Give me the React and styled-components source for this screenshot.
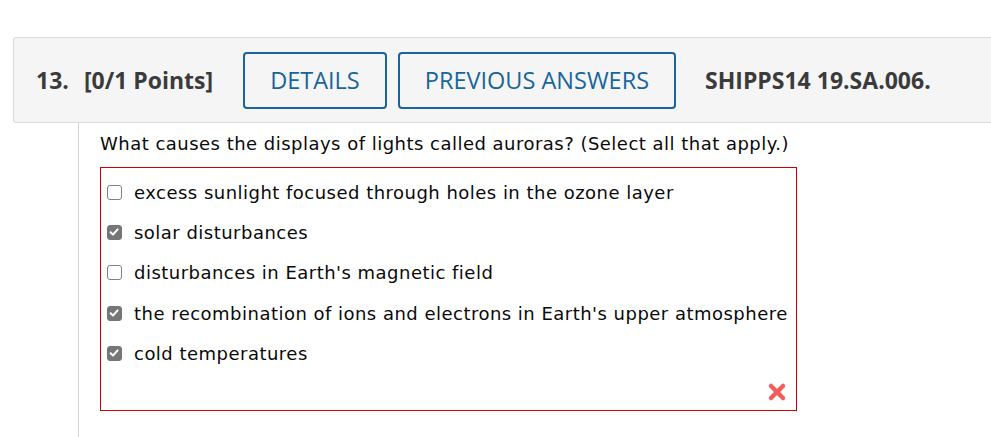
import React from "react";
import styled, { createGlobalStyle } from "styled-components";

const GlobalStyle = createGlobalStyle`
  html, body {
    margin: 0;
    padding: 0;
    background: #ffffff;
  }
`;

const options = [
  { label: "excess sunlight focused through holes in the ozone layer", checked: false },
  { label: "solar disturbances", checked: true },
  { label: "disturbances in Earth's magnetic field", checked: false },
  { label: "the recombination of ions and electrons in Earth's upper atmosphere", checked: true },
  { label: "cold temperatures", checked: true },
];

const Page = styled.div`
  padding: 37px 0 0 13px;
  overflow: hidden;
`;

const Header = styled.div`
  display: flex;
  align-items: center;
  height: 84px;
  padding-left: 22px;
  background: #f5f5f5;
  border: 1px solid #dcdcdc;
  border-right: none;
  border-radius: 3px 0 0 3px;
  font-family: "Open Sans", sans-serif;
`;

const Title = styled.span`
  font-size: 23px;
  font-weight: 700;
  color: #3b3b3b;
  margin: 0 ${(p) => p.$right || 0}px 0 ${(p) => p.$left || 0}px;
  white-space: nowrap;
`;

const ActionButton = styled.button`
  height: 57px;
  padding: 0 25px;
  margin-right: 11px;
  background: transparent;
  border: 2px solid #18659c;
  border-radius: 4px;
  font-family: "Open Sans", sans-serif;
  font-size: 23.5px;
  color: #18659c;
  white-space: nowrap;
`;

const Body = styled.div`
  margin-left: 65px;
  border-left: 1px solid #d4d4d4;
  padding: 8px 0 30px 21px;
  font-family: "DejaVu Sans", Verdana, sans-serif;
  letter-spacing: 0.48px;
  color: #0a0a0a;
`;

const Question = styled.p`
  margin: 0 0 10px 0;
  font-size: 18px;
  line-height: 26px;
`;

const AnswerBox = styled.div`
  width: 697px;
  height: 244px;
  border: 1px solid #d40000;
  position: relative;
  padding-top: 4px;
  box-sizing: border-box;
`;

const OptionRow = styled.div`
  display: flex;
  align-items: center;
  height: 40.3px;
  padding-left: 6px;
  font-size: 18px;
`;

const Box = styled.span`
  display: block;
  width: 15px;
  height: 15px;
  min-width: 15px;
  box-sizing: border-box;
  border-radius: 3px;
  margin-right: 12px;
  background: ${(p) => (p.$checked ? "#767676" : "#ffffff")};
  border: 1.5px solid ${(p) => (p.$checked ? "#767676" : "#808080")};
`;

const CheckMark = styled.svg`
  display: block;
  width: 12px;
  height: 12px;
`;

const WrongMark = styled.svg`
  position: absolute;
  right: 9px;
  bottom: 8px;
`;

const Checkbox = ({ checked }) => (
  <Box $checked={checked}>
    {checked && (
      <CheckMark viewBox="0 0 12 12">
        <path d="M2.6 6.2 L5 8.6 L9.6 3.4" fill="none" stroke="#fff" strokeWidth="2" strokeLinecap="round" strokeLinejoin="round" />
      </CheckMark>
    )}
  </Box>
);

export default function App() {
  return (
    <>
      <GlobalStyle />
      <Page>
        <Header>
          <Title $right={15}>13.</Title>
          <Title $right={30}>[0/1 Points]</Title>
          <ActionButton>DETAILS</ActionButton>
          <ActionButton>PREVIOUS ANSWERS</ActionButton>
          <Title $left={18}>SHIPPS14 19.SA.006.</Title>
        </Header>
        <Body>
          <Question>What causes the displays of lights called auroras? (Select all that apply.)</Question>
          <AnswerBox>
            {options.map((o) => (
              <OptionRow key={o.label}>
                <Checkbox checked={o.checked} />
                <span>{o.label}</span>
              </OptionRow>
            ))}
            <WrongMark width="20" height="20" viewBox="0 0 20 20">
              <path d="M4 4 L16 16 M16 4 L4 16" stroke="#f25c5c" strokeWidth="4.5" strokeLinecap="round" />
            </WrongMark>
          </AnswerBox>
        </Body>
      </Page>
    </>
  );
}
